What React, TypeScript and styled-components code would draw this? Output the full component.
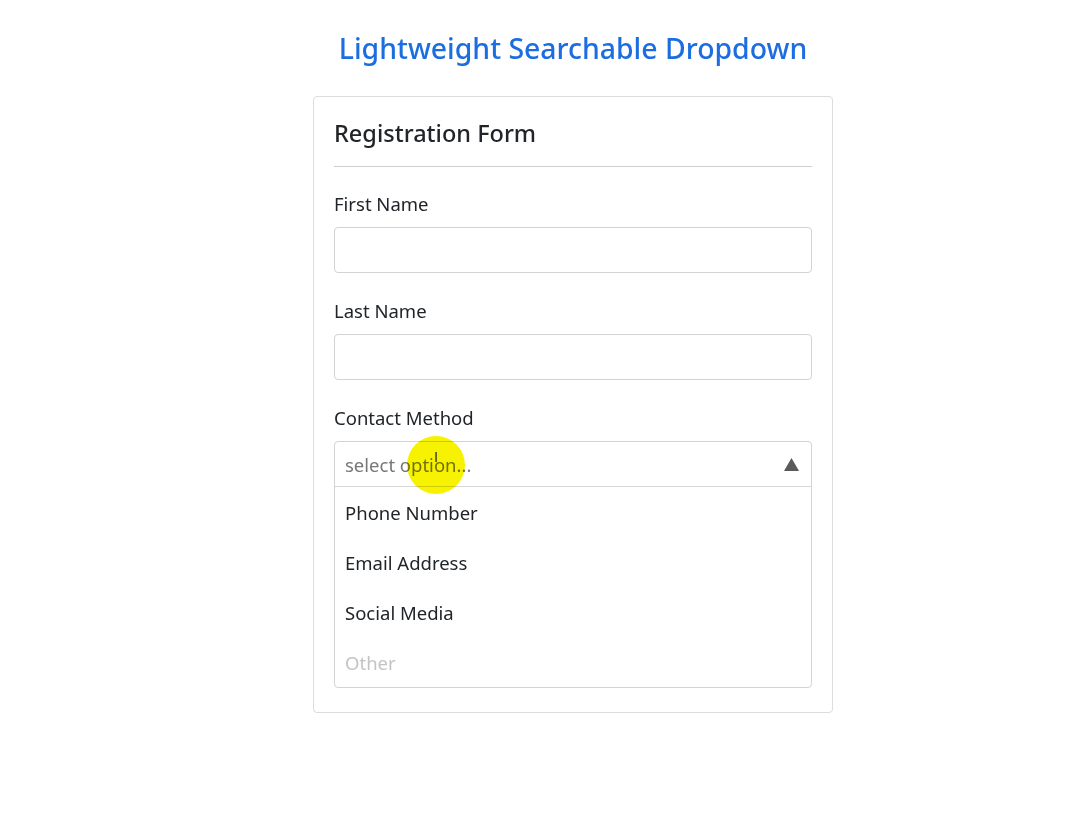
import React from 'react';
import styled, { createGlobalStyle } from 'styled-components';

const GlobalStyle = createGlobalStyle`
  html, body {
    margin: 0;
    padding: 0;
    background: #ffffff;
  }
  body {
    font-family: "Noto Sans", "Open Sans", Arial, sans-serif;
    color: #212529;
  }
  * { box-sizing: border-box; }
`;

const Page = styled.div`
  display: flex;
  flex-direction: column;
  align-items: center;
  padding: 26px 0 0 54px;
  min-height: 836px;
`;

const Title = styled.h1`
  margin: 0 0 26px;
  font-size: 28.4px;
  line-height: 44px;
  font-weight: 500;
  color: #1c6ee0;
`;

const Card = styled.div`
  width: 520px;
  border: 1px solid #dcdcdc;
  border-radius: 4px;
  padding: 20px 20px 24px;
`;

const CardTitle = styled.h2`
  margin: 0;
  padding-bottom: 16px;
  border-bottom: 1px solid #cfcfcf;
  font-size: 23.5px;
  line-height: 33px;
  font-weight: 500;
  color: #212529;
`;

const Fields = styled.div`
  display: flex;
  flex-direction: column;
  gap: 24px;
  padding-top: 23px;
`;

const Field = styled.div`
  display: flex;
  flex-direction: column;
  gap: 10px;
`;

const Label = styled.label`
  font-size: 18.5px;
  line-height: 27px;
  color: #212529;
`;

const TextInput = styled.input`
  height: 46px;
  width: 100%;
  border: 1px solid #d3d3d3;
  border-radius: 4px;
  padding: 0 11px;
  font: inherit;
  font-size: 18.5px;
  background: transparent;
  outline: none;
`;

const Dropdown = styled.div`
  border: 1px solid #d3d3d3;
  border-radius: 4px;
`;

const SelectRow = styled.div`
  position: relative;
  display: flex;
  align-items: center;
  height: 45px;
  padding: 0 12px 0 10px;
  border-bottom: 1px solid #d6d6d6;
`;

const SearchInput = styled.input`
  flex: 1;
  border: none;
  outline: none;
  background: transparent;
  font: inherit;
  font-size: 18.5px;
  color: #212529;
  padding: 0;
  &::placeholder {
    color: #777777;
  }
`;

const Caret = styled.svg`
  width: 15px;
  height: 13px;
  fill: #5a5a5a;
`;

const CursorHalo = styled.div`
  position: absolute;
  left: 72px;
  top: -6px;
  width: 58px;
  height: 58px;
  border-radius: 50%;
  background: #f6f200;
  mix-blend-mode: multiply;
  pointer-events: none;
  display: flex;
  justify-content: center;
  padding-top: 14px;
  font-family: "DejaVu Sans", sans-serif;
  font-size: 14px;
  line-height: 1;
  color: #333;
`;

const OptionList = styled.ul`
  list-style: none;
  margin: 0;
  padding: 0;
`;

const Option = styled.li<{ $disabled?: boolean }>`
  height: 50px;
  display: flex;
  align-items: center;
  padding: 0 11px 0 10px;
  font-size: 18.5px;
  color: ${p => (p.$disabled ? '#c4c4c4' : '#212529')};
`;

const options = [
  { label: 'Phone Number' },
  { label: 'Email Address' },
  { label: 'Social Media' },
  { label: 'Other', disabled: true },
];

export default function App() {
  return (
    <>
      <GlobalStyle />
      <Page>
        <Title>Lightweight Searchable Dropdown</Title>
        <Card>
          <CardTitle>Registration Form</CardTitle>
          <Fields>
            <Field>
              <Label>First Name</Label>
              <TextInput type="text" />
            </Field>
            <Field>
              <Label>Last Name</Label>
              <TextInput type="text" />
            </Field>
            <Field>
              <Label>Contact Method</Label>
              <Dropdown>
                <SelectRow>
                  <SearchInput placeholder="select option..." />
                  <Caret viewBox="0 0 15 13">
                    <polygon points="7.5,0 15,13 0,13" />
                  </Caret>
                  <CursorHalo>I</CursorHalo>
                </SelectRow>
                <OptionList>
                  {options.map(o => (
                    <Option key={o.label} $disabled={o.disabled}>
                      {o.label}
                    </Option>
                  ))}
                </OptionList>
              </Dropdown>
            </Field>
          </Fields>
        </Card>
      </Page>
    </>
  );
}
